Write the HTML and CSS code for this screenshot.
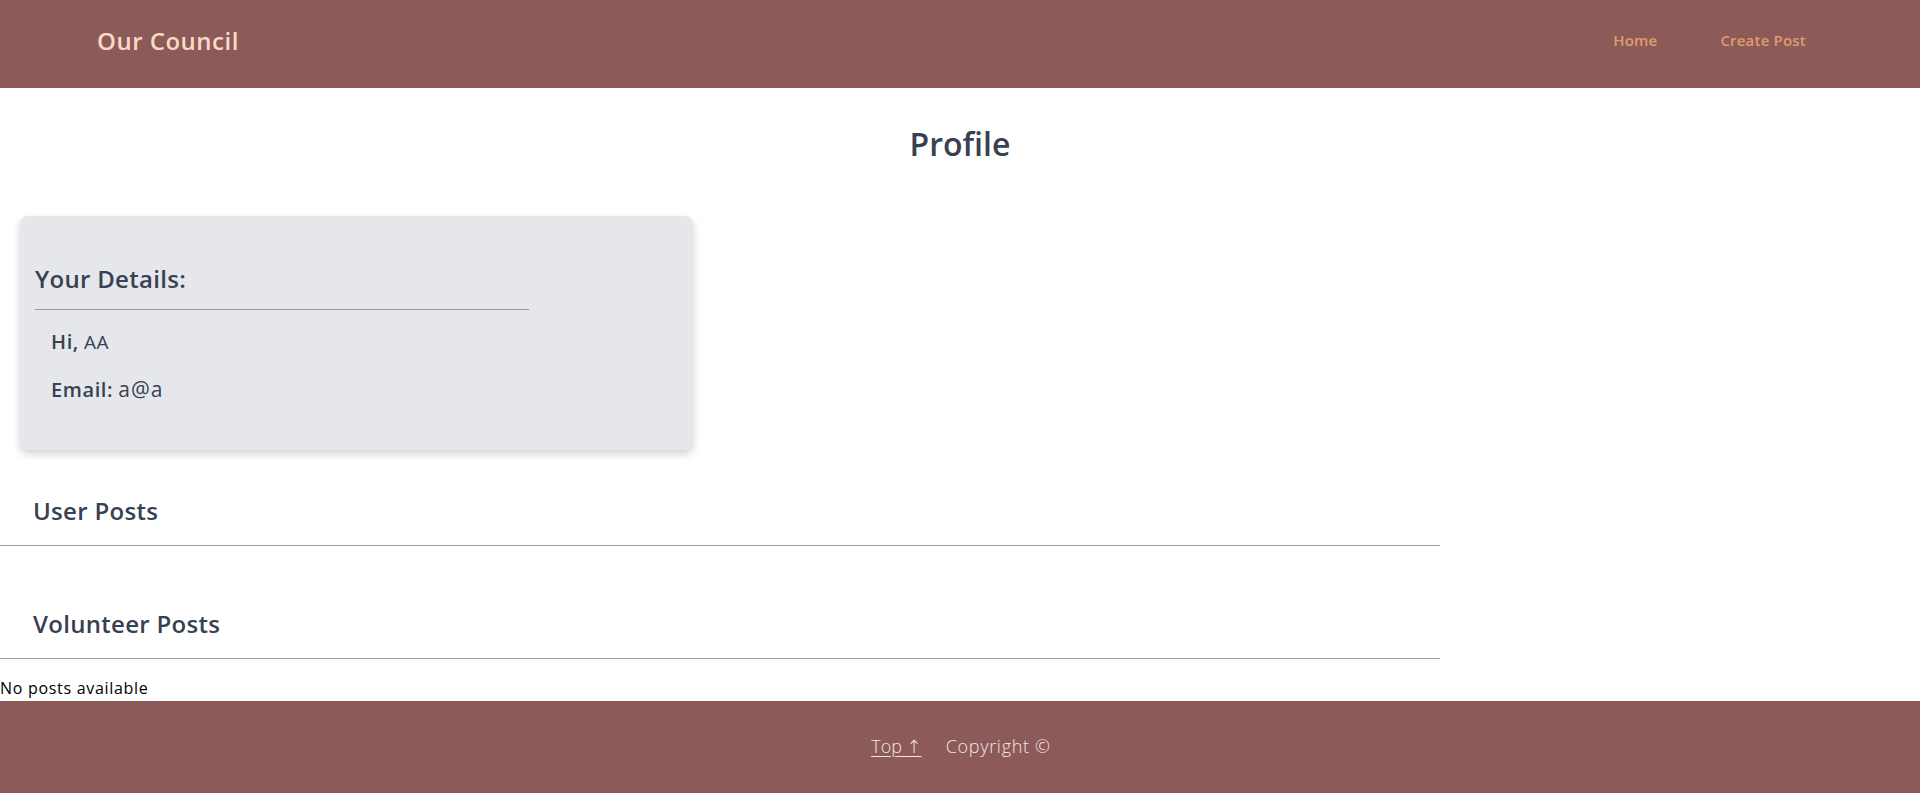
FILE: index.html
```html
<!DOCTYPE html>
<html lang="en">
<head>
<meta charset="utf-8">
<title>Profile - Our Council</title>
<link rel="stylesheet" href="styles.css">
</head>
<body>
<header class="site-header">
  <a class="logo" href="#">Our Council</a>
  <nav class="nav">
    <a href="#">Home</a>
    <a href="#">Create Post</a>
  </nav>
</header>
<main class="main">
  <h1 class="page-title">Profile</h1>
  <section class="card">
    <h2 class="card-title">Your Details:</h2>
    <hr class="card-rule">
    <div class="details">
      <p class="detail"><strong>Hi,</strong> <span class="value-name">AA</span></p>
      <p class="detail"><strong>Email:</strong> <span class="value">a@a</span></p>
    </div>
  </section>
  <section class="posts posts-user">
    <h2 class="posts-title">User Posts</h2>
    <hr class="posts-rule">
  </section>
  <section class="posts posts-volunteer">
    <h2 class="posts-title">Volunteer Posts</h2>
    <hr class="posts-rule">
    <p class="empty">No posts available</p>
  </section>
</main>
<footer class="site-footer">
  <a class="top-link" href="#">Top ↑</a>
  <span class="copyright">Copyright ©</span>
</footer>
</body>
</html>
```
FILE: styles.css
```css
* { box-sizing: border-box; }
html, body { margin: 0; padding: 0; }
body {
  font-family: "Open Sans", "DejaVu Sans", sans-serif;
  background: #ffffff;
  color: #000;
}
.site-header {
  height: 88px;
  background: #8c5a59;
  display: flex;
  justify-content: space-between;
  align-items: flex-start;
  padding: 0 114px 0 97px;
}
.logo {
  margin-top: 23px;
  font-size: 24px;
  line-height: 36px;
  font-weight: 600;
  color: #fbdac2;
  text-decoration: none;
  letter-spacing: 0.5px;
}
.nav {
  margin-top: 30px;
  display: flex;
  gap: 63px;
}
.nav a {
  font-size: 15px;
  line-height: 21px;
  font-weight: 600;
  color: #df9d6c;
  text-decoration: none;
  letter-spacing: 0.2px;
}
.main {
  display: flex;
  flex-direction: column;
  align-items: flex-start;
}
.page-title {
  align-self: stretch;
  text-align: center;
  margin: 32px 0 0 0;
  font-size: 32px;
  line-height: 48px;
  font-weight: 600;
  color: #374151;
}
.card {
  margin: 48px 0 0 20px;
  width: 673px;
  height: 234px;
  background: #e5e7eb;
  border-radius: 8px;
  box-shadow: 0 4px 8px rgba(0, 0, 0, 0.18);
  padding: 45px 15px 0 15px;
}
.card-title {
  margin: 0;
  font-size: 24px;
  line-height: 36px;
  font-weight: 600;
  color: #374151;
  letter-spacing: 0.3px;
}
.card-rule {
  margin: 12px 0 0 0;
  width: 494px;
  border: 0;
  border-top: 1px solid #9a9a9a;
  height: 0;
}
.details {
  margin-top: 18px;
  padding-left: 16px;
  display: flex;
  flex-direction: column;
  gap: 20px;
}
.detail {
  margin: 0;
  font-size: 20px;
  line-height: 27px;
  color: #374151;
}
.detail strong { font-weight: 600; letter-spacing: 0.6px; }
.value-name { font-weight: 500; font-size: 19px; letter-spacing: 0.5px; }
.value { font-weight: 400; font-size: 21px; letter-spacing: 1px; }
.posts {
  align-self: stretch;
}
.posts-user { margin-top: 43px; }
.posts-volunteer { margin-top: 60px; }
.posts-title {
  margin: 0;
  padding-left: 33px;
  font-size: 24px;
  line-height: 36px;
  font-weight: 600;
  color: #374151;
  letter-spacing: 0.3px;
}
.posts-rule {
  margin: 16px 0 0 0;
  width: 1440px;
  border: 0;
  border-top: 1px solid #9a9a9a;
  height: 0;
}
.empty {
  margin: 17px 0 0 0;
  font-size: 16px;
  line-height: 24px;
  color: #000;
  letter-spacing: 0.7px;
}
.site-footer {
  margin-top: 1px;
  height: 92px;
  background: #8c5a59;
  display: flex;
  justify-content: center;
  align-items: flex-start;
  gap: 24px;
  padding-top: 32px;
  padding-left: 2px;
}
.top-link, .copyright {
  font-size: 18px;
  line-height: 27px;
  font-weight: 300;
  color: #f3e6e6;
}
.copyright { letter-spacing: 0.7px; }
.top-link { text-decoration: underline; text-underline-offset: 3px; }
```
